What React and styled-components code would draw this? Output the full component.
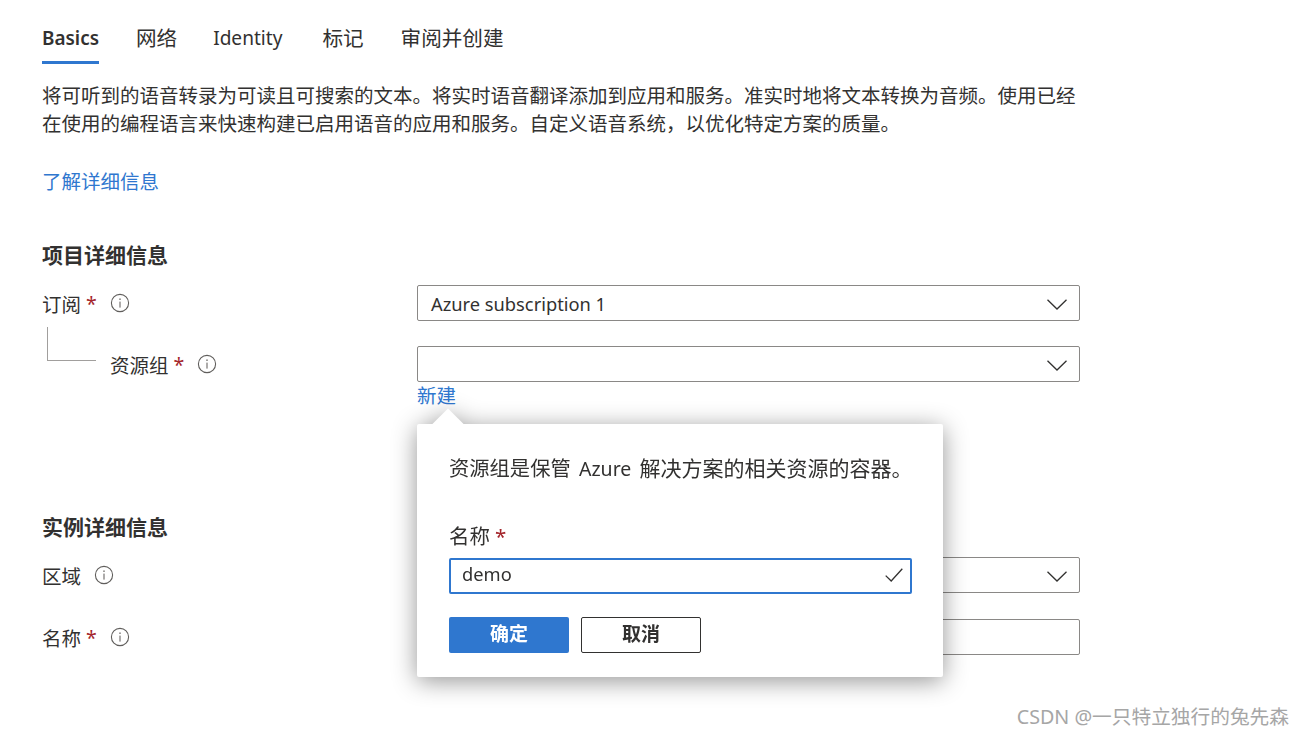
import React from 'react';
import styled, { createGlobalStyle } from 'styled-components';

const GlobalStyle = createGlobalStyle`
  html, body {
    margin: 0;
    background: #fff;
  }
  body {
    font-family: "Noto Sans", "Noto Sans CJK SC", sans-serif;
    color: #323130;
  }
`;

const InfoIcon = () => (
  <InfoSvg viewBox="0 0 20 20">
    <circle cx="10" cy="10" r="8.6" fill="none" stroke="#605e5c" strokeWidth="1.1" />
    <circle cx="10" cy="6.2" r="0.9" fill="#8a8886" />
    <rect x="9.3" y="8.6" width="1.4" height="6" fill="#8a8886" />
  </InfoSvg>
);

const Chevron = () => (
  <ChevronSvg viewBox="0 0 20 11">
    <path d="M0.5 0.8 L10 10 L19.5 0.8" fill="none" stroke="#323130" strokeWidth="1.3" />
  </ChevronSvg>
);

const Field = ({ label, required, indent, gap = 16, children }) => (
  <FieldRow $gap={gap}>
    <LabelCell $indent={indent}>
      {indent && <TreeLine />}
      <span>{label}</span>
      {required && <Star>*</Star>}
      <InfoIcon />
    </LabelCell>
    {children}
  </FieldRow>
);

const App = () => {
  return (
    <Page>
      <GlobalStyle />
      <Tabs>
        <Tab $active $latin>Basics</Tab>
        <Tab>网络</Tab>
        <IdentityTab $latin>Identity</IdentityTab>
        <Tab>标记</Tab>
        <Tab>审阅并创建</Tab>
      </Tabs>
      <Intro>
        将可听到的语音转录为可读且可搜索的文本。将实时语音翻译添加到应用和服务。准实时地将文本转换为音频。使用已经在使用的编程语言来快速构建已启用语音的应用和服务。自定义语音系统，以优化特定方案的质量。
      </Intro>
      <LearnMore>了解详细信息</LearnMore>

      <SectionTitle>项目详细信息</SectionTitle>
      <Field label="订阅" required>
        <Select>
          <SelectText>Azure subscription 1</SelectText>
          <Chevron />
        </Select>
      </Field>
      <Field label="资源组" required indent gap={25}>
        <ControlStack>
          <Select>
            <Chevron />
          </Select>
          <NewLink>新建</NewLink>
          <Popover>
            <Arrow />
            <PopoverText>
              资源组是保管 <Latin>Azure</Latin> <Tail>解决方案的相关资源的容器。</Tail>
            </PopoverText>
            <PopoverLabel>
              名称<Star>*</Star>
            </PopoverLabel>
            <NameInput>
              <InputText>demo</InputText>
              <CheckSvg viewBox="0 0 18 14">
                <path d="M0.7 7.6 L6.2 13 L17.3 0.8" fill="none" stroke="#323130" strokeWidth="1.3" />
              </CheckSvg>
            </NameInput>
            <Buttons>
              <PrimaryButton>确定</PrimaryButton>
              <SecondaryButton>取消</SecondaryButton>
            </Buttons>
          </Popover>
        </ControlStack>
      </Field>

      <SectionTitle $second>实例详细信息</SectionTitle>
      <Field label="区域">
        <Select>
          <Chevron />
        </Select>
      </Field>
      <Field label="名称" required gap={26}>
        <Select />
      </Field>
      <Watermark>CSDN @一只特立独行的兔先森</Watermark>
    </Page>
  );
};

export default App;

const Page = styled.div`
  position: relative;
  width: 1304px;
  height: 736px;
  box-sizing: border-box;
  padding: 18px 0 0 42px;
  overflow: hidden;
`;

const Tabs = styled.div`
  display: flex;
  gap: 37px;
  height: 46px;
`;

const Tab = styled.div`
  height: 46px;
  box-sizing: border-box;
  font-size: ${(p) => (p.$active ? '18.9px' : p.$latin ? '19.1px' : '20.6px')};
  line-height: 40px;
  font-weight: ${(p) => (p.$active ? 600 : 400)};
  border-bottom: 3px solid ${(p) => (p.$active ? '#2f77cf' : 'transparent')};
`;

const IdentityTab = styled(Tab)`
  margin: 0 3px 0 -1px;
`;

const Intro = styled.p`
  width: 1040px;
  margin: 18px 0 0;
  font-size: 19.5px;
  line-height: 28px;
`;

const LearnMore = styled.div`
  margin-top: 30px;
  font-size: 19.5px;
  line-height: 28px;
  color: #2f77cf;
`;

const SectionTitle = styled.div`
  margin-top: ${(p) => (p.$second ? '103px' : '45px')};
  font-size: 21px;
  line-height: 28px;
  font-weight: 700;
`;

const FieldRow = styled.div`
  display: grid;
  grid-template-columns: 375px 663px;
  align-items: start;
  margin-top: ${(p) => p.$gap}px;
`;

const LabelCell = styled.div`
  display: flex;
  align-items: center;
  height: 36px;
  font-size: 19.5px;
  padding-left: ${(p) => (p.$indent ? '5px' : '0')};
`;

const TreeLine = styled.div`
  align-self: flex-start;
  flex: none;
  width: 49px;
  height: 34px;
  margin: -19px 14px 0 0;
  box-sizing: border-box;
  border-left: 1px solid #a19f9d;
  border-bottom: 1px solid #a19f9d;
`;

const Star = styled.span`
  margin-left: 5px;
  color: #a4262c;
`;

const InfoSvg = styled.svg`
  width: 20px;
  height: 20px;
  margin-left: 13px;
`;

const ChevronSvg = styled.svg`
  width: 20px;
  height: 11px;
  margin: 2px 0 0 auto;
`;

const CheckSvg = styled.svg`
  width: 18px;
  height: 14px;
  margin-bottom: 2px;
`;

const ControlStack = styled.div`
  position: relative;
`;

const Select = styled.div`
  display: flex;
  align-items: center;
  height: 36px;
  box-sizing: border-box;
  padding: 0 12px 0 13px;
  border: 1px solid #8a8886;
  border-radius: 2px;
  background: #fff;
`;

const SelectText = styled.span`
  font-size: 18.3px;
`;

const NewLink = styled.div`
  font-size: 19.5px;
  line-height: 28px;
  color: #2f77cf;
`;

const Popover = styled.div`
  position: absolute;
  top: 78px;
  left: 0;
  z-index: 2;
  width: 526px;
  height: 253px;
  box-sizing: border-box;
  padding: 31px 31px 0 32px;
  background: #fff;
  border-radius: 2px;
  filter: drop-shadow(0 4px 12px rgba(0, 0, 0, 0.42));
`;

const Arrow = styled.div`
  position: absolute;
  top: -11px;
  left: 20px;
  width: 22px;
  height: 22px;
  background: #fff;
  transform: rotate(45deg);
`;

const PopoverText = styled.div`
  position: relative;
  height: 28px;
  font-size: 20.3px;
  line-height: 26px;
  word-spacing: 3px;
  white-space: nowrap;
`;

const Latin = styled.span`
  font-size: 19.5px;
`;

const Tail = styled.span`
  font-size: 21px;
`;

const PopoverLabel = styled.div`
  height: 28px;
  margin-top: 39px;
  font-size: 20.5px;
  line-height: 28px;
`;

const NameInput = styled.div`
  display: flex;
  align-items: center;
  justify-content: space-between;
  height: 36px;
  margin-top: 8px;
  box-sizing: border-box;
  padding: 0 7px 0 11px;
  border: 2px solid #2f77cf;
  border-radius: 2px;
`;

const InputText = styled.span`
  font-size: 18.3px;
  position: relative;
  top: -3px;
`;

const Buttons = styled.div`
  display: flex;
  gap: 12px;
  margin-top: 23px;
`;

const PrimaryButton = styled.div`
  width: 120px;
  height: 36px;
  box-sizing: border-box;
  background: #2f77cf;
  border-radius: 2px;
  color: #fff;
  font-size: 19px;
  font-weight: 700;
  line-height: 34px;
  text-align: center;
`;

const SecondaryButton = styled(PrimaryButton)`
  background: #fff;
  border: 1px solid #323130;
  color: #323130;
  line-height: 32px;
`;

const Watermark = styled.div`
  position: absolute;
  right: 15px;
  bottom: 7px;
  font-size: 19.7px;
  line-height: 24px;
  color: #a6a6a6;
`;
